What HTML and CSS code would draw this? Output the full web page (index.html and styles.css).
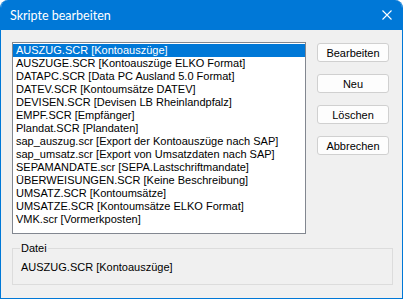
FILE: index.html
```html
<!DOCTYPE html>
<html lang="de">

<head>
    <meta charset="UTF-8">
    <title>Skripte bearbeiten</title>
    <link rel="stylesheet" href="styles.css">
</head>

<body>
    <div class="dialog">
        <div class="title-bar">
            <span class="title-text">Skripte bearbeiten</span>
            <span class="close-btn">
                <svg width="10" height="10" viewBox="0 0 10 10">
                    <path d="M0.5 0.5 L9.5 9.5 M9.5 0.5 L0.5 9.5" stroke="#fff" stroke-width="1.1" fill="none"/>
                </svg>
            </span>
        </div>

        <div class="dialog-body">
            <div class="main-row">
                <ul class="script-list">
                    <li class="selected">AUSZUG.SCR [Kontoauszüge]</li>
                    <li>AUSZUGE.SCR [Kontoauszüge ELKO Format]</li>
                    <li>DATAPC.SCR [Data PC Ausland 5.0 Format]</li>
                    <li>DATEV.SCR [Kontoumsätze DATEV]</li>
                    <li>DEVISEN.SCR [Devisen LB Rheinlandpfalz]</li>
                    <li>EMPF.SCR [Empfänger]</li>
                    <li>Plandat.SCR [Plandaten]</li>
                    <li>sap_auszug.scr [Export der Kontoauszüge nach SAP]</li>
                    <li>sap_umsatz.scr [Export von Umsatzdaten nach SAP]</li>
                    <li>SEPAMANDATE.scr [SEPA.Lastschriftmandate]</li>
                    <li>ÜBERWEISUNGEN.SCR [Keine Beschreibung]</li>
                    <li>UMSATZ.SCR [Kontoumsätze]</li>
                    <li>UMSATZE.SCR [Kontoumsätze ELKO Format]</li>
                    <li>VMK.scr [Vormerkposten]</li>
                </ul>

                <div class="button-column">
                    <div class="win-button">Bearbeiten</div>
                    <div class="win-button">Neu</div>
                    <div class="win-button">Löschen</div>
                    <div class="win-button">Abbrechen</div>
                </div>
            </div>

            <div class="file-group">
                <span class="group-label">Datei</span>
                <div class="file-name">AUSZUG.SCR [Kontoauszüge]</div>
            </div>
        </div>
    </div>
</body>

</html>
```

FILE: styles.css
```css
:root {
    --accent: #0078d7;
    --face: #f0f0f0;
    --text: #000;
}

* {
    margin: 0;
    padding: 0;
    box-sizing: border-box;
}

body {
    background: #fff;
    font-family: 'Liberation Sans', Arial, sans-serif;
    font-size: 11px;
    color: var(--text);
}

.dialog {
    width: 403px;
    height: 299px;
    background: var(--face);
    border: 1px solid var(--accent);
    border-top: none;
    border-radius: 8px 8px 0 0;
    overflow: hidden;
    display: flex;
    flex-direction: column;
}

.title-bar {
    height: 30px;
    background: var(--accent);
    display: flex;
    align-items: center;
    justify-content: space-between;
    padding: 0 10px 0 9px;
    flex-shrink: 0;
}

.title-text {
    color: #fff;
    font-family: 'Lato', 'Noto Sans', sans-serif;
    font-size: 12.5px;
}

.close-btn {
    display: flex;
    width: 10px;
    height: 10px;
}

.dialog-body {
    padding: 12px 0 0 11px;
}

.main-row {
    display: flex;
    gap: 11px;
}

.script-list {
    list-style: none;
    width: 294px;
    height: 192px;
    background: #fff;
    border: 1px solid #828790;
    padding: 1px 0;
}

.script-list li {
    height: 13px;
    line-height: 13px;
    padding-left: 3px;
    white-space: nowrap;
}

.script-list li.selected {
    background: var(--accent);
    color: #fff;
}

.button-column {
    display: flex;
    flex-direction: column;
    gap: 12px;
    padding-top: 1px;
}

.win-button {
    width: 72px;
    height: 19px;
    background: #fdfdfd;
    border: 1px solid #d0d0d0;
    border-radius: 3px;
    display: flex;
    align-items: center;
    justify-content: center;
}

.file-group {
    position: relative;
    width: 381px;
    height: 37px;
    margin-top: 14px;
    border: 1px solid #dcdcdc;
    padding: 12px 0 0 8px;
}

.group-label {
    position: absolute;
    top: -7px;
    left: 7px;
    padding: 0 1px;
    line-height: 13px;
    background: var(--face);
}

.file-name {
    line-height: 13px;
}
```
